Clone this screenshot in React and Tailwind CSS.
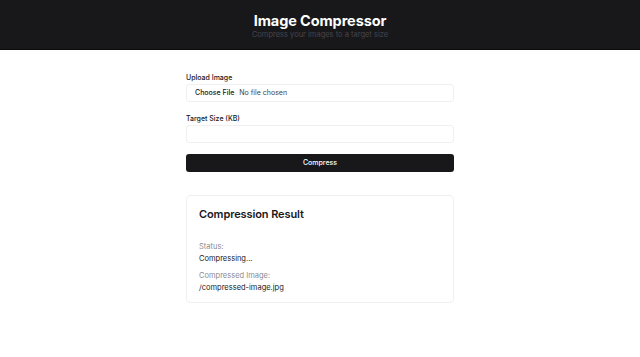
export default function App() {
  return (
    <div className="min-h-[357px] bg-white" style={{ fontFamily: "Inter, 'Noto Sans', sans-serif" }}>
      <header className="h-[50px] bg-[#18181b] border-b border-[#0c0c0e] flex flex-col items-center justify-center pt-[2px]">
        <h1 className="text-[14.5px] leading-[18px] font-bold text-white tracking-[-0.1px]">Image Compressor</h1>
        <p className="text-[7.5px] leading-[10px] text-[#45454c]">Compress your images to a target size</p>
      </header>
      <main className="w-[268px] mx-auto pt-[23px]">
        <div className="flex flex-col">
          <label className="text-[7px] leading-[10px] font-medium text-[#18181b]">Upload Image</label>
          <div className="mt-[1px] h-[18px] border border-[#f0f0f2] rounded-[3px] flex items-center px-[8px] text-[7px]">
            <span className="font-medium text-[#18181b]">Choose File</span>
            <span className="ml-[5px] text-[#3f3f46]">No file chosen</span>
          </div>
        </div>
        <div className="flex flex-col mt-[12px]">
          <label className="text-[7px] leading-[10px] font-medium text-[#18181b]">Target Size (KB)</label>
          <div className="mt-[1px] h-[18px] border border-[#f0f0f2] rounded-[3px]"></div>
        </div>
        <button className="mt-[11px] w-full h-[18px] bg-[#18181b] rounded-[3px] text-white text-[7px] font-medium flex items-center justify-center">
          Compress
        </button>
        <section className="mt-[23px] border border-[#f0f0f2] rounded-[4px] px-[12px] pt-[10px] pb-[9px]">
          <h2 className="text-[11px] leading-[16px] font-semibold text-[#18181b] tracking-[-0.1px]">Compression Result</h2>
          <div className="mt-[19px] text-[7.5px] leading-[11px]">
            <p className="text-[#8a8a93]">Status:</p>
            <p className="text-[#18181b] mt-[1px]">Compressing...</p>
            <p className="text-[#8a8a93] mt-[6px]">Compressed Image:</p>
            <p className="text-[#18181b] mt-[1px]">/compressed-image.jpg</p>
          </div>
        </section>
      </main>
    </div>
  );
}
